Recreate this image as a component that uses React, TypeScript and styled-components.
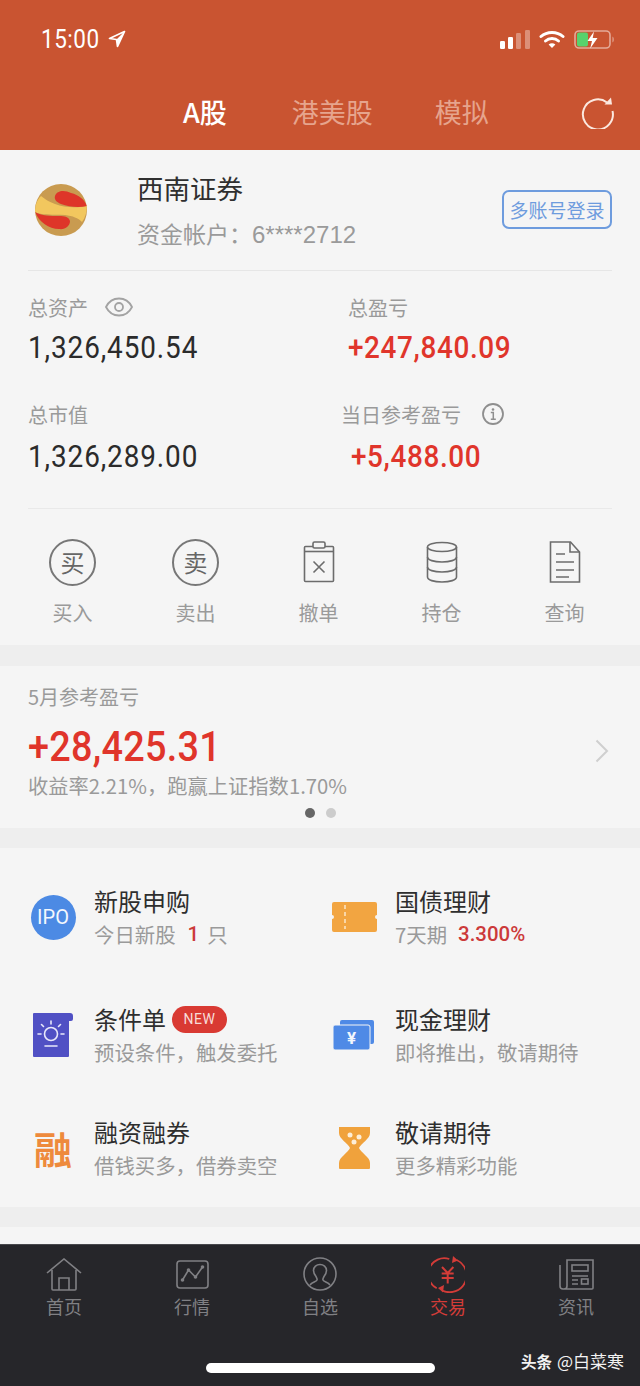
import React from 'react'
import styled, { createGlobalStyle } from 'styled-components'

const cjk = `"Noto Sans CJK SC", "Liberation Sans", sans-serif`
const num = `Roboto, "Noto Sans CJK SC", sans-serif`

const Global = createGlobalStyle`
  html, body { margin: 0; padding: 0; background: #f5f5f5; }
  * { box-sizing: border-box; }
  svg { display: block; }
`

const Page = styled.div`
  width: 640px;
  height: 1386px;
  overflow: hidden;
  position: relative;
  font-family: ${cjk};
  background: #f5f5f5;
  display: flex;
  flex-direction: column;
`

const Header = styled.header`
  height: 150px;
  background: #c95431;
  color: #fff;
`

const StatusBar = styled.div`
  height: 78px;
  display: flex;
  align-items: center;
  padding: 0 25px 0 41px;
`

const Clock = styled.span`
  font-family: ${num};
  font-size: 25px;
  margin-right: 2px;
  letter-spacing: 0.6px;
  transform: scaleX(0.9);
  transform-origin: left center;
`

const StatusRight = styled.div`
  margin-left: auto;
  display: flex;
  align-items: center;
  gap: 9px;
`

const TabRow = styled.div`
  height: 72px;
  display: flex;
  align-items: center;
  padding: 0 26px 4px 183px;
`

const Tab = styled.span<{ $active?: boolean; $gap?: number }>`
  font-size: 27px;
  line-height: 36px;
  margin-left: ${({ $gap }) => $gap || 0}px;
  font-weight: ${({ $active }) => ($active ? 500 : 400)};
  color: ${({ $active }) => ($active ? '#fff' : '#e6a48d')};
`

const RefreshBox = styled.div`
  margin-left: auto;
`

const Inset = styled.div`
  margin: 0 28px;
`

const AccountRow = styled(Inset)`
  height: 121px;
  display: flex;
  align-items: center;
  border-bottom: 1px solid #e6e6e6;
`

const LogoBox = styled.div`
  width: 109px;
  padding-left: 7px;
`

const AccountName = styled.div`
  font-size: 26.5px;
  line-height: 36px;
  color: #2f2f2f;
`

const AccountNo = styled.div`
  font-size: 23px;
  line-height: 32px;
  margin-top: 11px;
  color: #9a9a9a;
  span { font-family: "Liberation Sans", sans-serif; font-size: 24px; }
`

const LoginButton = styled.button`
  margin-left: auto;
  width: 110px;
  height: 39px;
  padding: 0;
  border: 2px solid #6e9cde;
  border-radius: 7px;
  background: transparent;
  color: #6e9cde;
  font-family: ${cjk};
  font-size: 19px;
  margin-bottom: 1px;
`

const Stats = styled(Inset)`
  height: 238px;
  padding-top: 21px;
  border-bottom: 1px solid #e9e9e9;
  display: grid;
  grid-template-columns: 313px 1fr;
  grid-template-rows: 77px auto;
  row-gap: 30px;
  align-content: start;
`

const Stat = styled.div<{ $labelShift?: number; $valueShift?: number }>`
  > div:first-child { margin-left: ${({ $labelShift }) => $labelShift || 0}px; }
  > div:last-child { margin-left: ${({ $valueShift }) => $valueShift || 0}px; }
`

const StatLabel = styled.div`
  display: flex;
  align-items: center;
  height: 30px;
  font-size: 20px;
  color: #9a9a9a;
`

const LabelIcon = styled.span<{ $gap: number }>`
  margin-left: ${({ $gap }) => $gap}px;
`

// DIN-like figures: Roboto narrowed, with a little tracking
const StatValue = styled.div<{ $up?: boolean; $low?: boolean }>`
  font-family: ${num};
  font-size: 31px;
  line-height: 40px;
  margin-top: ${({ $low }) => ($low ? 8 : 6)}px;
  font-weight: ${({ $up }) => ($up ? 500 : 400)};
  letter-spacing: ${({ $up }) => ($up ? 0.7 : 1)}px;
  white-space: nowrap;
  transform: scaleX(0.9);
  transform-origin: left center;
  color: ${({ $up }) => ($up ? '#e0352b' : '#2b2b2b')};
`

const Actions = styled.div`
  height: 136px;
  padding: 21px 11px 0;
  display: grid;
  grid-template-columns: repeat(5, 123px);
`

const Action = styled.div`
  display: flex;
  flex-direction: column;
  align-items: center;
`

const ActionIcon = styled.div`
  height: 64px;
  display: flex;
  align-items: center;
  justify-content: center;
`

const RoundIcon = styled.div`
  width: 47px;
  height: 47px;
  border: 2px solid #777;
  border-radius: 50%;
  color: #666;
  font-size: 24px;
  line-height: 41px;
  text-align: center;
`

const ActionLabel = styled.div`
  font-size: 20px;
  line-height: 28px;
  margin-top: 5px;
  color: #9a9a9a;
`

const Band = styled.div<{ $h: number }>`
  height: ${({ $h }) => $h}px;
  flex: none;
  background: #eeeeee;
`

const Profit = styled.section`
  height: 162px;
  padding: 17px 28px 0;
  position: relative;
`

const ProfitTitle = styled.div`
  font-size: 20px;
  line-height: 28px;
  color: #9a9a9a;
`

const ProfitValue = styled.div`
  font-family: ${num};
  font-size: 42px;
  line-height: 50px;
  margin-top: 11px;
  font-weight: 500;
  letter-spacing: 0.3px;
  white-space: nowrap;
  transform: scaleX(0.9);
  transform-origin: left center;
  color: #e0352b;
`

const ProfitNote = styled.div`
  font-size: 20.3px;
  line-height: 28px;
  margin-top: -1px;
  color: #9a9a9a;
`

const Chevron = styled.div`
  position: absolute;
  right: 31px;
  top: 73px;
`

const Dots = styled.div`
  display: flex;
  justify-content: center;
  gap: 11px;
  margin-top: 9px;
`

const Dot = styled.i<{ $on?: boolean }>`
  width: 10px;
  height: 10px;
  border-radius: 50%;
  background: ${({ $on }) => ($on ? '#666' : '#ccc')};
`

const Services = styled.section`
  height: 359px;
  padding-top: 37px;
  display: grid;
  grid-template-columns: 301px 1fr;
  grid-template-rows: 118px 113px 1fr;
`

const Service = styled.div`
  display: grid;
  grid-template-columns: 94px 1fr;
`

const ServiceIcon = styled.div`
  display: flex;
  justify-content: center;
  align-items: center;
  height: 64px;
  padding-left: 12px;
  width: 94px;
`

const ServiceTitle = styled.div`
  display: flex;
  align-items: center;
  font-size: 24px;
  line-height: 32px;
  color: #2e2e2e;
`

const ServiceSub = styled.div`
  display: flex;
  align-items: center;
  font-size: 20.4px;
  line-height: 28px;
  margin-top: 3px;
  color: #9a9a9a;
`

const NewBadge = styled.span`
  margin-left: 6px;
  width: 55px;
  height: 27px;
  border-radius: 14px;
  background: #d93a33;
  color: #f8dcd8;
  font-family: ${num};
  font-size: 14px;
  letter-spacing: 0.6px;
  line-height: 27px;
  text-align: center;
`

const Accent = styled.b<{ $left: number; $right?: number }>`
  font-family: ${num};
  font-weight: 500;
  margin-left: ${({ $left }) => $left}px;
  margin-right: ${({ $right }) => $right || 0}px;
  color: #cc3a3a;
`

const IpoBadge = styled.div`
  width: 45px;
  height: 45px;
  border-radius: 50%;
  background: #4c8ae4;
  color: #f3f7fd;
  font-family: ${num};
  font-size: 20px;
  line-height: 45px;
  text-align: center;
`

const RongGlyph = styled.span`
  font-size: 38px;
  line-height: 40px;
  font-weight: 700;
  color: #ee8a3c;
`

const Spacer = styled.div`
  flex: 1;
`

const TabBar = styled.nav`
  height: 142px;
  flex: none;
  background: #26262a;
  border-top: 1px solid #48484c;
  position: relative;
  display: grid;
  grid-template-columns: repeat(5, 128px);
  align-content: start;
  padding-top: 10px;
`

const NavItem = styled.div<{ $active?: boolean }>`
  display: flex;
  flex-direction: column;
  align-items: center;
  font-size: 18px;
  line-height: 24px;
  color: ${({ $active }) => ($active ? '#d33c38' : '#808084')};
`

const NavIcon = styled.div`
  height: 38px;
  display: flex;
  align-items: center;
  margin-bottom: 1px;
`

const HomeBar = styled.div`
  position: absolute;
  left: 206px;
  top: 118px;
  width: 229px;
  height: 10px;
  border-radius: 5px;
  background: #fff;
`

const Watermark = styled.div`
  position: absolute;
  right: 16px;
  top: 103px;
  display: flex;
  align-items: center;
  gap: 5px;
  font-size: 17px;
  line-height: 26px;
  color: #f2f2f2;
  b { font-weight: 700; font-size: 15.5px; }
`

const SignalIcon = () => (
  <svg width="30" height="19" viewBox="0 0 30 19">
    <rect x="0" y="11" width="5" height="8" rx="1.2" fill="#fff" />
    <rect x="8" y="7" width="5" height="12" rx="1.2" fill="#fff" />
    <rect x="16" y="3" width="5" height="16" rx="1.2" fill="#fff" fillOpacity=".35" />
    <rect x="25" y="0" width="5" height="19" rx="1.2" fill="#fff" fillOpacity=".35" />
  </svg>
)

const WifiIcon = () => (
  <svg width="26" height="19" viewBox="0 0 26 19" fill="none" stroke="#fff" strokeWidth="3" strokeLinecap="round">
    <path d="M2 6.500C8 1 18 1 24 6.500" />
    <path d="M6.500 11c3.600-3.200 9.400-3.200 13 0" />
    <path d="M13 18l-3.400-3.600c2-1.500 4.800-1.500 6.800 0z" fill="#fff" strokeWidth="0" />
  </svg>
)

const BatteryIcon = () => (
  <svg width="41" height="19" viewBox="0 0 41 19">
    <rect x="1" y="1" width="35" height="17" rx="4" fill="none" stroke="#fff" strokeOpacity=".5" strokeWidth="1.600" />
    <rect x="3" y="2.500" width="11" height="14" rx="2" fill="#58d26c" />
    <path d="M38.500 6.500c1.600.6 1.600 5.400 0 6z" fill="#fff" fillOpacity=".5" />
    <path d="M20 1.500L13.500 11h4.500l-1.800 7.500L23.500 8h-4.800z" fill="#fff" />
  </svg>
)

const ArrowIcon = () => (
  <svg width="18" height="18" viewBox="0 0 18 18" fill="none" stroke="#fff" strokeWidth="1.700" strokeLinejoin="round">
    <path d="M16.500 1.500L1.500 8.500l7 1 1 7z" />
    <path d="M16.500 1.500L8.500 9.500l1 7z" fill="#fff" stroke="none" />
  </svg>
)

const RefreshIcon = () => (
  <svg width="33" height="33" viewBox="0 0 33 33" fill="none">
    <path d="M26 6.500A15 15 0 1 0 31.500 15" stroke="#fbe8df" strokeWidth="2" />
    <path d="M23.500 8.500L31 8.500 30 1.500z" fill="#fbe8df" />
  </svg>
)

const CompanyLogo = () => (
  <svg width="52" height="52" viewBox="0 0 52 52">
    <defs>
      <clipPath id="logoClip"><circle cx="26" cy="26" r="26" /></clipPath>
    </defs>
    <g clipPath="url(#logoClip)">
      <rect width="52" height="52" fill="#c99b50" />
      <path d="M0 28C0 21 2 16 6 12c4 3 8 6 14 8 10 4 22 4 32 2 0 6-2 12-5 16-4-4-9-6-17-7-10-1-22 1-30-3z" fill="#f2c75e" />
      <path d="M20 12c2-6 10-6 16-3 8 2 13 6 16 13-8 2-18 1-26-2-5-2-7-5-6-8z" fill="#de3529" />
      <path d="M0 28c6 4 16 4 24 4 6 0 10 1 11 5 0 5-5 9-11 8C14 45 4 38 0 28z" fill="#de3529" />
    </g>
  </svg>
)

const EyeIcon = () => (
  <svg width="28" height="20" viewBox="0 0 28 20" fill="none" stroke="#a3a3a3" strokeWidth="1.800">
    <path d="M1 10C4 4 9 1.500 14 1.500S24 4 27 10c-3 6-8 8.500-13 8.500S4 16 1 10z" />
    <circle cx="14" cy="10" r="4" />
  </svg>
)

const InfoIcon = () => (
  <svg width="22" height="22" viewBox="0 0 22 22" fill="none" stroke="#8e8e8e" strokeWidth="1.800">
    <circle cx="11" cy="11" r="10" />
    <circle cx="11" cy="6.500" r="1.300" fill="#8e8e8e" stroke="none" />
    <path d="M8.800 9.500H11.300V16M8.800 16.200h5" strokeWidth="1.500" />
  </svg>
)

const ClipboardIcon = () => (
  <svg width="32" height="42" viewBox="0 0 32 42" fill="none" stroke="#6c6c6c" strokeWidth="1.600">
    <rect x="1.500" y="5.500" width="29" height="35" rx="1" />
    <rect x="10" y="1" width="12" height="6" rx="1.500" fill="#f5f5f5" />
    <path d="M1.500 10.500h29" />
    <path d="M10.500 20.500l11 11M21.500 20.500l-11 11" />
  </svg>
)

const DatabaseIcon = () => (
  <svg width="32" height="42" viewBox="0 0 32 42" fill="none" stroke="#6c6c6c" strokeWidth="1.600">
    <ellipse cx="16" cy="6" rx="14.500" ry="4.500" />
    <path d="M1.500 6v30c0 3 6.500 5 14.500 5s14.500-2 14.500-5V6" />
    <path d="M1.500 16c0 3 6.500 5 14.500 5s14.500-2 14.500-5" />
    <path d="M1.500 26c0 3 6.500 5 14.500 5s14.500-2 14.500-5" />
  </svg>
)

const DocumentIcon = () => (
  <svg width="32" height="42" viewBox="0 0 32 42" fill="none" stroke="#6c6c6c" strokeWidth="1.600">
    <path d="M1.500 1h20l9 10v30h-29z" />
    <path d="M21 1v10h9.500" />
    <path d="M7 13h9M7 21h18M7 29h18M7 36h13" />
  </svg>
)

const ChevronIcon = () => (
  <svg width="14" height="24" viewBox="0 0 14 24" fill="none" stroke="#cfcfcf" strokeWidth="2">
    <path d="M1.500 1.500L12 12 1.500 22.500" />
  </svg>
)

const ConditionIcon = () => (
  <svg width="40" height="44" viewBox="0 0 40 44">
    <path d="M1 0h36a3 3 0 0 1 3 3v3a2 2 0 0 1-2 2h-2v35a1 1 0 0 1-1 1H1a1 1 0 0 1-1-1V1a1 1 0 0 1 1-1z" fill="#5050c4" />
    <g fill="none" stroke="#e8e8fa" strokeWidth="1.600" strokeLinecap="round">
      <circle cx="18" cy="21" r="6.500" />
      <path d="M18 8v3M8.500 11.500l2 2M27.500 11.500l-2 2M5 21h3M28 21h3M12 33h12" />
    </g>
  </svg>
)

const TicketIcon = () => (
  <svg width="45" height="30" viewBox="0 0 45 30">
    <path d="M2 0h41a2 2 0 0 1 2 2v11a2 2 0 0 0 0 4v11a2 2 0 0 1-2 2H2a2 2 0 0 1-2-2V17a2 2 0 0 0 0-4V2a2 2 0 0 1 2-2z" fill="#f2a541" />
    <path d="M13 3v24" stroke="#fbe3c0" strokeWidth="1.600" strokeDasharray="4 3" />
  </svg>
)

const CashIcon = () => (
  <svg width="42" height="31" viewBox="0 0 42 31">
    <rect x="7" y="0" width="34" height="24" rx="2" fill="#4f8ae6" />
    <rect x="0" y="5" width="37" height="25" rx="2" fill="#4f8ae6" stroke="#f5f5f5" strokeWidth="1" />
    <text x="18.500" y="24" fontFamily="Roboto, sans-serif" fontSize="17" fontWeight="700" textAnchor="middle" fill="#f3f7fd">¥</text>
  </svg>
)

const HourglassIcon = () => (
  <svg width="31" height="42" viewBox="0 0 31 42">
    <path d="M0 0h31v6c0 6-9 10-11 15 2 5 11 9 11 15v5a1 1 0 0 1-1 1H1a1 1 0 0 1-1-1v-5c0-6 9-10 11-15C9 16 0 12 0 6z" fill="#f0a23c" />
    <circle cx="11" cy="8" r="2.500" fill="#fdeed8" />
    <circle cx="20" cy="10" r="2.500" fill="#fdeed8" />
    <circle cx="15" cy="15" r="2.500" fill="#fdeed8" />
  </svg>
)

const HomeNavIcon = () => (
  <svg width="36" height="33" viewBox="0 0 36 33" fill="none" stroke="#808084" strokeWidth="1.600">
    <path d="M1 15L18 1l17 14" />
    <path d="M6 12v19a1 1 0 0 0 1 1h22a1 1 0 0 0 1-1V12" />
    <path d="M13 32V20h10v12" />
  </svg>
)

const ChartNavIcon = () => (
  <svg width="33" height="29" viewBox="0 0 33 29" fill="none" stroke="#808084" strokeWidth="1.600">
    <rect x="1" y="1" width="31" height="27" rx="3" />
    <path d="M6.500 20l6-10 7 7 7-10" />
    <g fill="#808084" stroke="none">
      <circle cx="6.500" cy="20" r="1.800" /><circle cx="12.500" cy="10" r="1.800" />
      <circle cx="19.500" cy="17" r="1.800" /><circle cx="26.500" cy="7" r="1.800" />
    </g>
  </svg>
)

const PersonNavIcon = () => (
  <svg width="34" height="34" viewBox="0 0 34 34" fill="none" stroke="#808084" strokeWidth="1.600">
    <circle cx="17" cy="17" r="16" />
    <path d="M7 28c2-3 6-3 7-5 .5-1-.2-2-1-3.500-1.500-2-2.500-4-2.500-6 0-3.500 3-6 6.500-6s6.500 2.500 6.500 6c0 2-1 4-2.500 6-.8 1.500-1.500 2.500-1 3.500 1 2 5 2 7 5" />
  </svg>
)

const TradeNavIcon = () => (
  <svg width="34" height="38" viewBox="0 0 34 38" fill="none" stroke="#d33c38" strokeWidth="1.800">
    <path d="M18.300 4A16 16 0 0 0 5.700 33.300" />
    <path d="M25.700 5A16 16 0 0 1 11.700 35.700" />
    <path d="M22 1l5 4.500L21 8zM12 37.500L7 33l6-3z" fill="#d33c38" stroke="none" />
    <path d="M11 12l5.700 6 5.700-6M10.700 18.500h12M10.700 23h12M16.700 18v10.500" strokeWidth="2" />
  </svg>
)

const NewsNavIcon = () => (
  <svg width="35" height="31" viewBox="0 0 35 31" fill="none" stroke="#808084" strokeWidth="1.600">
    <path d="M1 6v21a3 3 0 0 0 3 3h29a1 1 0 0 0 1-1V1H8v26a3 3 0 0 1-3 3" />
    <rect x="13" y="6" width="16" height="6" />
    <path d="M13 17h16M13 21h6M13 25h6" />
    <rect x="22.500" y="20" width="6.500" height="5" />
  </svg>
)

const statusIcons = [SignalIcon, WifiIcon, BatteryIcon]

const actions = [
  { label: '买入', glyph: '买' },
  { label: '卖出', glyph: '卖' },
  { label: '撤单', Icon: ClipboardIcon },
  { label: '持仓', Icon: DatabaseIcon },
  { label: '查询', Icon: DocumentIcon },
]

const navItems = [
  { label: '首页', Icon: HomeNavIcon },
  { label: '行情', Icon: ChartNavIcon },
  { label: '自选', Icon: PersonNavIcon },
  { label: '交易', Icon: TradeNavIcon, active: true },
  { label: '资讯', Icon: NewsNavIcon },
]

const App: React.FC = () => (
  <Page>
    <Global />
    <Header>
      <StatusBar>
        <Clock>15:00</Clock>
        <ArrowIcon />
        <StatusRight>
          {statusIcons.map((Icon, i) => <Icon key={i} />)}
        </StatusRight>
      </StatusBar>
      <TabRow>
        <Tab $active>A股</Tab>
        <Tab $gap={65}>港美股</Tab>
        <Tab $gap={62}>模拟</Tab>
        <RefreshBox><RefreshIcon /></RefreshBox>
      </TabRow>
    </Header>

    <AccountRow>
      <LogoBox><CompanyLogo /></LogoBox>
      <div>
        <AccountName>西南证券</AccountName>
        <AccountNo>资金帐户：<span>6****2712</span></AccountNo>
      </div>
      <LoginButton>多账号登录</LoginButton>
    </AccountRow>

    <Stats>
      <Stat>
        <StatLabel>总资产<LabelIcon $gap={17}><EyeIcon /></LabelIcon></StatLabel>
        <StatValue>1,326,450.54</StatValue>
      </Stat>
      <Stat $labelShift={7} $valueShift={7}>
        <StatLabel>总盈亏</StatLabel>
        <StatValue $up>+247,840.09</StatValue>
      </Stat>
      <Stat>
        <StatLabel>总市值</StatLabel>
        <StatValue $low>1,326,289.00</StatValue>
      </Stat>
      <Stat $valueShift={10}>
        <StatLabel>当日参考盈亏<LabelIcon $gap={21}><InfoIcon /></LabelIcon></StatLabel>
        <StatValue $up $low>+5,488.00</StatValue>
      </Stat>
    </Stats>

    <Actions>
      {actions.map(({ label, glyph, Icon }) => (
        <Action key={label}>
          <ActionIcon>
            {Icon ? <Icon /> : <RoundIcon>{glyph}</RoundIcon>}
          </ActionIcon>
          <ActionLabel>{label}</ActionLabel>
        </Action>
      ))}
    </Actions>

    <Band $h={21} />

    <Profit>
      <ProfitTitle>5月参考盈亏</ProfitTitle>
      <ProfitValue>+28,425.31</ProfitValue>
      <ProfitNote>收益率2.21%，跑赢上证指数1.70%</ProfitNote>
      <Chevron><ChevronIcon /></Chevron>
      <Dots><Dot $on /><Dot /></Dots>
    </Profit>

    <Band $h={20} />

    <Services>
      <Service>
        <ServiceIcon><IpoBadge>IPO</IpoBadge></ServiceIcon>
        <div>
          <ServiceTitle>新股申购</ServiceTitle>
          <ServiceSub>今日新股<Accent $left={12} $right={8}>1</Accent>只</ServiceSub>
        </div>
      </Service>
      <Service>
        <ServiceIcon><TicketIcon /></ServiceIcon>
        <div>
          <ServiceTitle>国债理财</ServiceTitle>
          <ServiceSub>7天期<Accent $left={11}>3.300%</Accent></ServiceSub>
        </div>
      </Service>
      <Service>
        <ServiceIcon><ConditionIcon /></ServiceIcon>
        <div>
          <ServiceTitle>条件单<NewBadge>NEW</NewBadge></ServiceTitle>
          <ServiceSub>预设条件，触发委托</ServiceSub>
        </div>
      </Service>
      <Service>
        <ServiceIcon><CashIcon /></ServiceIcon>
        <div>
          <ServiceTitle>现金理财</ServiceTitle>
          <ServiceSub>即将推出，敬请期待</ServiceSub>
        </div>
      </Service>
      <Service>
        <ServiceIcon><RongGlyph>融</RongGlyph></ServiceIcon>
        <div>
          <ServiceTitle>融资融券</ServiceTitle>
          <ServiceSub>借钱买多，借券卖空</ServiceSub>
        </div>
      </Service>
      <Service>
        <ServiceIcon><HourglassIcon /></ServiceIcon>
        <div>
          <ServiceTitle>敬请期待</ServiceTitle>
          <ServiceSub>更多精彩功能</ServiceSub>
        </div>
      </Service>
    </Services>

    <Band $h={20} />
    <Spacer />

    <TabBar>
      {navItems.map(({ label, Icon, active }) => (
        <NavItem key={label} $active={active}>
          <NavIcon><Icon /></NavIcon>
          {label}
        </NavItem>
      ))}
      <HomeBar />
      <Watermark><b>头条</b>@白菜寒</Watermark>
    </TabBar>
  </Page>
)

export default App
